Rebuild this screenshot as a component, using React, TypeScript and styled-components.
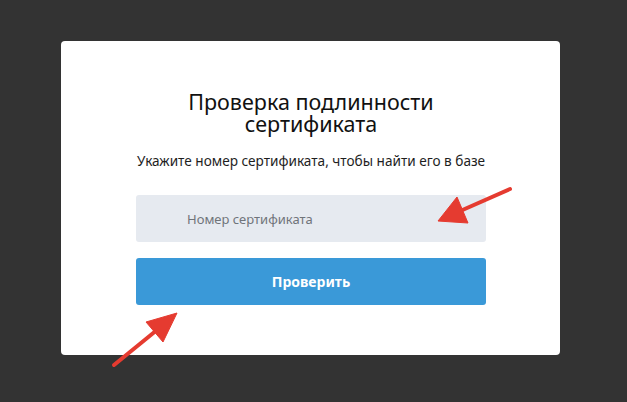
import React from 'react';
import styled, { createGlobalStyle } from 'styled-components';

const GlobalStyle = createGlobalStyle`
	html, body {
		margin: 0;
		padding: 0;
		background: #333333;
	}
	body {
		font-family: 'Noto Sans', 'Open Sans', sans-serif;
		width: 627px;
		height: 402px;
		overflow: hidden;
		position: relative;
	}
`;

const Page = styled.div`
	padding: 41px 0 0 61px;
`;

const Card = styled.div`
	width: 499px;
	height: 314px;
	box-sizing: border-box;
	background: #ffffff;
	border-radius: 4px;
	padding: 50px 74px 0 75px;
	display: flex;
	flex-direction: column;
	align-items: center;
`;

const Title = styled.h1`
	margin: 0;
	font-size: 21.5px;
	line-height: 22px;
	font-weight: 400;
	color: #111111;
	text-align: center;
	width: 280px;
`;

const Subtitle = styled.p`
	margin: 17px 0 0;
	font-size: 13.6px;
	line-height: 18px;
	color: #1e1e1e;
	white-space: nowrap;
`;

const Field = styled.input`
	margin-top: 25px;
	width: 350px;
	height: 47px;
	box-sizing: border-box;
	border: none;
	border-radius: 3px;
	background: #e6eaf0;
	padding: 0 0 0 51px;
	font-family: inherit;
	font-size: 13px;
	color: #333;
	outline: none;

	&::placeholder {
		color: #70747a;
	}
`;

const Submit = styled.button`
	margin-top: 16px;
	width: 350px;
	height: 47px;
	border: none;
	border-radius: 3px;
	background: #3a99d8;
	color: #ffffff;
	font-family: inherit;
	font-size: 14px;
	font-weight: 700;
	cursor: pointer;
`;

const Overlay = styled.svg`
	position: absolute;
	left: 0;
	top: 0;
	pointer-events: none;
`;

const Arrow: React.FC<{ tail: [number, number]; tip: [number, number]; a: [number, number]; b: [number, number] }> = ({ tail, tip, a, b }) => {
	const mid: [number, number] = [(a[0] + b[0]) / 2, (a[1] + b[1]) / 2];
	return (
		<g fill="#e53b30" stroke="#e53b30">
			<line x1={tail[0]} y1={tail[1]} x2={mid[0]} y2={mid[1]} strokeWidth={4} strokeLinecap="round" />
			<polygon points={`${tip[0]},${tip[1]} ${a[0]},${a[1]} ${b[0]},${b[1]}`} strokeWidth={1} strokeLinejoin="round" />
		</g>
	);
};

export default function App() {
	return (
		<>
			<GlobalStyle />
			<Page>
				<Card>
					<Title>Проверка подлинности сертификата</Title>
					<Subtitle>Укажите номер сертификата, чтобы найти его в базе</Subtitle>
					<Field placeholder="Номер сертификата" />
					<Submit>Проверить</Submit>
				</Card>
			</Page>
			<Overlay width="627" height="402" viewBox="0 0 627 402">
				<Arrow tail={[510, 189]} tip={[438, 221]} a={[457, 197]} b={[468, 223]} />
				<Arrow tail={[114, 365]} tip={[177, 313]} a={[146, 322]} b={[163, 342]} />
			</Overlay>
		</>
	);
}
